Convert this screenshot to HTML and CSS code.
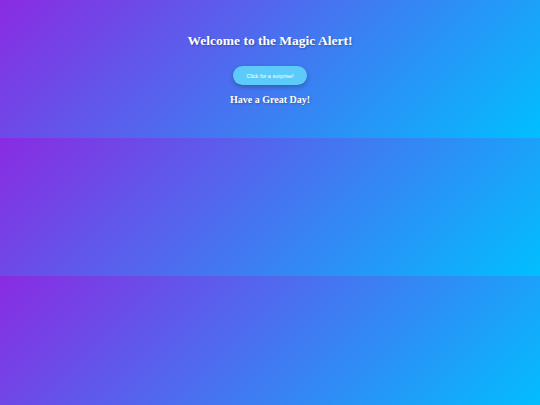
FILE: index.html
```html
<!DOCTYPE html>
<html>
<head>
<meta charset="utf-8">
<link rel="stylesheet" href="styles.css">
</head>
<body>
<div class="page">
  <h1 class="title">Welcome to the Magic Alert!</h1>
  <button class="btn">Click for a surprise!</button>
  <h2 class="sub">Have a Great Day!</h2>
</div>
</body>
</html>
```
FILE: styles.css
```css
html, body {
  margin: 0;
  padding: 0;
}
body {
  background: linear-gradient(135deg, #8a2be2, #00bfff);
  font-family: "Liberation Serif", "Times New Roman", serif;
  color: #fff;
}
.page {
  height: 138px;
  display: flex;
  flex-direction: column;
  align-items: center;
  box-sizing: border-box;
  padding-top: 32px;
}
.title {
  margin: 0;
  font-size: 13.5px;
  line-height: 18px;
  font-weight: bold;
  text-shadow: 1px 1px 2px rgba(0,0,0,0.3);
}
.btn {
  margin-top: 16px;
  width: 74px;
  height: 19px;
  border: none;
  border-radius: 10px;
  background: #5ccbf9;
  color: #fff;
  font-family: "Liberation Sans", Arial, sans-serif;
  font-size: 5.5px;
  padding: 0;
  box-shadow: 0 2px 5px rgba(0,0,0,0.25);
}
.sub {
  margin: 8px 0 0;
  font-size: 10px;
  line-height: 14px;
  font-weight: bold;
  text-shadow: 1px 1px 2px rgba(0,0,0,0.3);
}
```
